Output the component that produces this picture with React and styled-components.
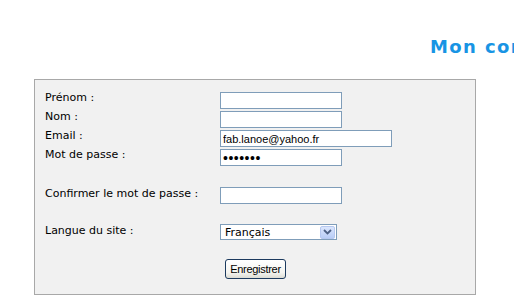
import React from 'react';
import styled, { createGlobalStyle } from 'styled-components';

const GlobalStyle = createGlobalStyle`
  html, body {
    margin: 0;
    padding: 0;
    background: #ffffff;
    overflow: hidden;
  }
`;

const Page = styled.div`
  width: 514px;
  height: 301px;
  overflow: hidden;
`;

const Title = styled.h1`
  margin: 36px 0 0 430px;
  font-family: 'DejaVu Sans', Verdana, sans-serif;
  font-size: 18px;
  line-height: 21px;
  font-weight: bold;
  letter-spacing: 1.4px;
  color: #1894e4;
  white-space: nowrap;
`;

const Panel = styled.div`
  box-sizing: border-box;
  margin: 22px 0 0 34px;
  width: 442px;
  height: 216px;
  padding: 12px 0 0 10px;
  background: #f1f1f1;
  border: 1px solid #a8a8a8;
  display: flex;
  flex-direction: column;
`;

const Row = styled.div`
  display: grid;
  grid-template-columns: 175px 1fr;
  align-items: start;
  height: ${(p) => p.$h || 19}px;
  margin-top: ${(p) => p.$gap || 0}px;
`;

const Label = styled.label`
  font-family: 'DejaVu Sans', Verdana, sans-serif;
  font-size: 11px;
  line-height: 13px;
  color: #000;
  margin-top: ${(p) => p.$offset || 0}px;
  white-space: nowrap;
`;

const Field = styled.input`
  box-sizing: border-box;
  width: ${(p) => p.$w || 122}px;
  height: 17px;
  margin: 0;
  padding: 0 2px;
  border: 1px solid #7f9db9;
  background: #ffffff;
  font-family: 'Liberation Sans', Arial, sans-serif;
  font-size: ${(p) => (p.type === 'password' ? 14 : 11)}px;
  letter-spacing: ${(p) => (p.type === 'password' ? 0.5 : 0)}px;
  color: #000;
  outline: none;
`;

const Select = styled.div`
  box-sizing: border-box;
  width: 117px;
  height: 16px;
  border: 1px solid #7f9db9;
  background: #fff;
  display: flex;
  align-items: center;
  justify-content: space-between;
  padding: 0 1px 0 4px;
`;

const SelectText = styled.span`
  font-family: 'DejaVu Sans', Verdana, sans-serif;
  font-size: 11px;
  line-height: 13px;
  color: #000;
`;

const Arrow = styled.span`
  box-sizing: border-box;
  width: 15px;
  height: 13px;
  border: 1px solid #b6c8f0;
  border-radius: 2px;
  background: linear-gradient(#dbe6fd, #b9cdf7);
  display: flex;
  align-items: center;
  justify-content: center;
`;

const Button = styled.button`
  box-sizing: border-box;
  margin-left: 5px;
  width: 61px;
  height: 20px;
  padding: 0;
  border: 1px solid #1c3a5e;
  border-radius: 3px;
  background: linear-gradient(#ffffff, #f4f4f0 70%, #dcdcd4);
  font-family: 'Liberation Sans', Arial, sans-serif;
  font-size: 11px;
  letter-spacing: -0.3px;
  color: #000;
`;

const fields = [
  { label: 'Prénom :', type: 'text', value: '' },
  { label: 'Nom :', type: 'text', value: '' },
  { label: 'Email :', type: 'text', value: 'fab.lanoe@yahoo.fr', w: 172 },
  { label: 'Mot de passe :', type: 'password', value: 'abcdefg' },
];

export default function App() {
  return (
    <Page>
      <GlobalStyle />
      <Title>Mon compte</Title>
      <Panel>
        {fields.map((f) => (
          <Row key={f.label}>
            <Label $offset={-1}>{f.label}</Label>
            <Field type={f.type} defaultValue={f.value} $w={f.w} readOnly />
          </Row>
        ))}
        <Row $gap={19}>
          <Label $offset={0}>Confirmer le mot de passe :</Label>
          <Field type="password" defaultValue="" readOnly />
        </Row>
        <Row $gap={18} $h={16}>
          <Label $offset={0}>Langue du site :</Label>
          <Select>
            <SelectText>Français</SelectText>
            <Arrow>
              <svg width="9" height="6" viewBox="0 0 9 6">
                <path d="M1 1 L4.5 4.5 L8 1" fill="none" stroke="#4d6185" strokeWidth="1.8" />
              </svg>
            </Arrow>
          </Select>
        </Row>
        <Row $gap={19} $h={20}>
          <span />
          <Button type="button">Enregistrer</Button>
        </Row>
      </Panel>
    </Page>
  );
}
